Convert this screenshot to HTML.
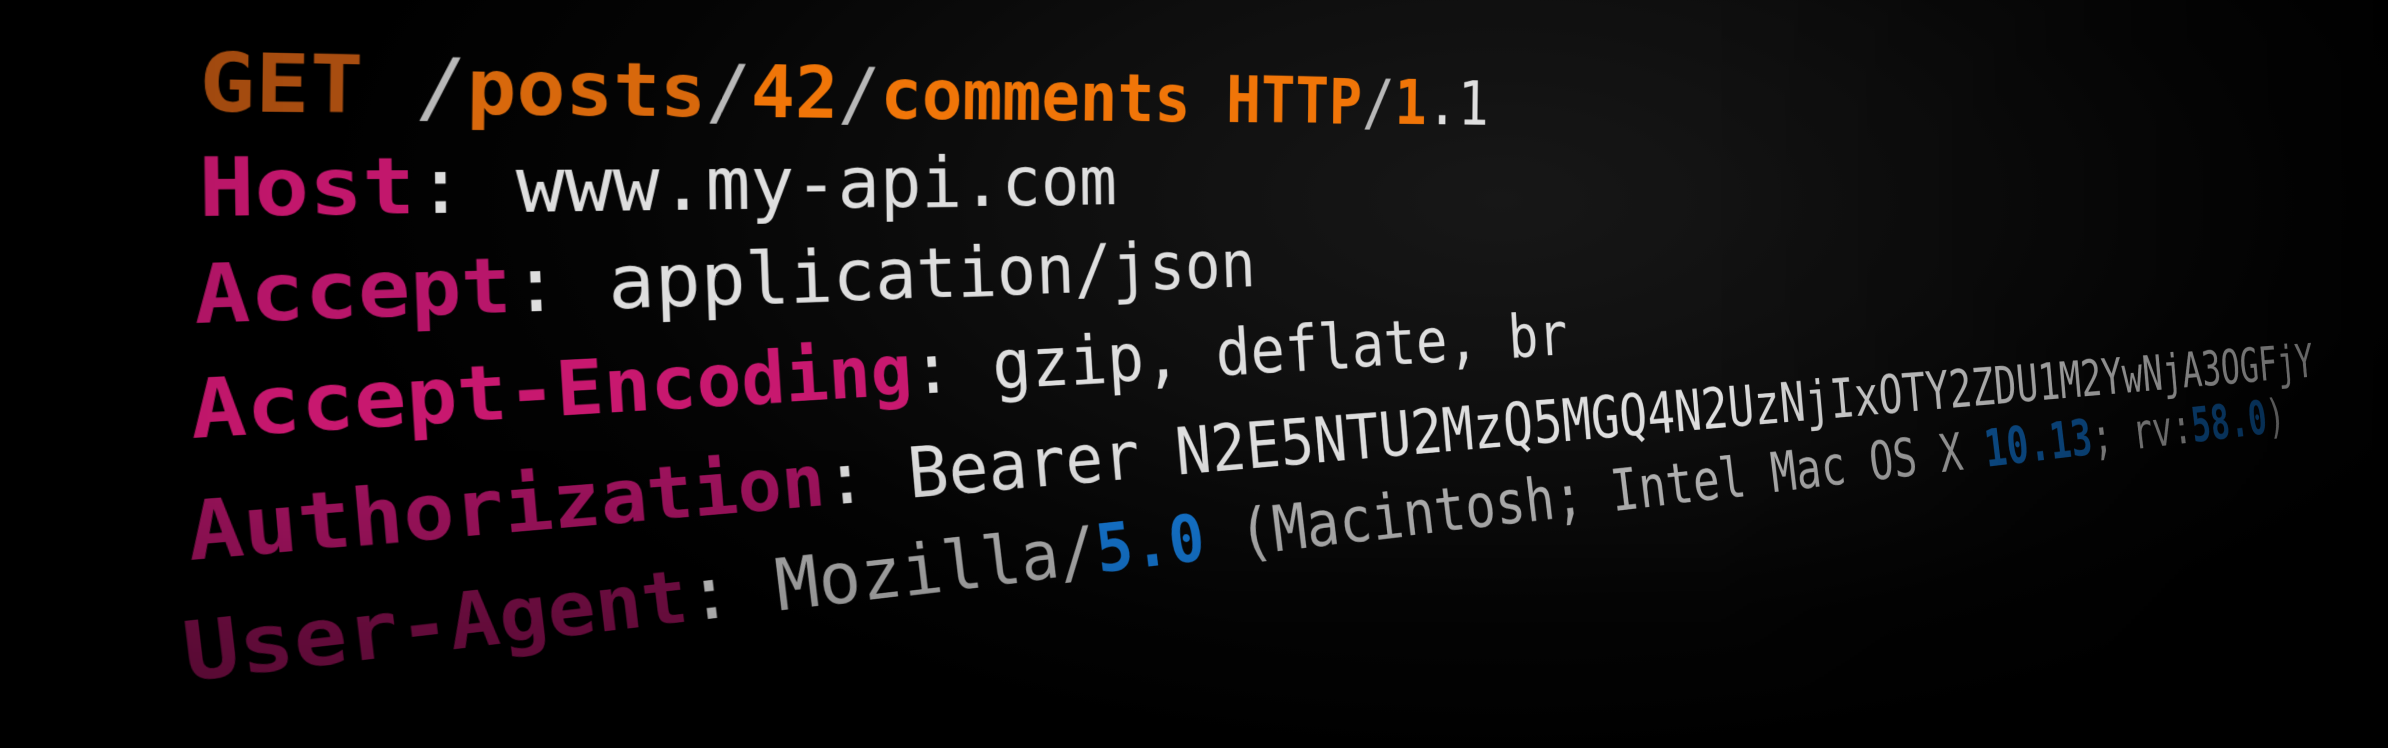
<!DOCTYPE html>
<html><head><meta charset="utf-8">
<style>
html,body{margin:0;padding:0;}
body{width:2388px;height:748px;overflow:hidden;position:relative;
background:radial-gradient(ellipse 1200px 600px at 1500px 200px,#171717 0%,#0e0e0e 40%,#040404 75%,#000 100%);}
.l{position:absolute;white-space:pre;font-family:"DejaVu Sans Mono","Liberation Mono",monospace;font-size:82px;line-height:82px;height:82px;
transform-origin:0 69px;color:#dedede;}
.k{font-weight:bold}
.o1{color:#a84d10;font-weight:bold}
.o2{color:#d8680c;font-weight:bold}
.o3{color:#f07508;font-weight:bold}
.s{color:#b8b8b8}
.b{color:#1577d2;font-weight:bold}
.fade{position:absolute;left:0;top:0;width:2388px;height:748px;
background:linear-gradient(90deg,rgba(0,0,0,.15) 0%,rgba(0,0,0,0) 12%,rgba(0,0,0,0) 72%,rgba(0,0,0,.55) 97%,rgba(0,0,0,.7) 100%);}
.fade2{position:absolute;left:0;top:0;width:2388px;height:748px;
background:linear-gradient(180deg,rgba(0,0,0,0) 0%,rgba(0,0,0,0) 60%,rgba(0,0,0,.35) 100%);}
</style></head><body>
<div class="l" style="left:199px;top:43px;transform:rotate(0.6deg) perspective(4878px) rotateY(45deg) scaleX(1.62)"><span class="o1">GET</span> <span class="s">/</span><span class="o2">posts</span><span class="s">/</span><span class="o3">42</span><span class="s">/</span><span class="o3">comments HTTP</span><span class="s">/</span><span class="o3">1</span>.1</div>
<div class="l" style="left:199px;top:148px;transform:rotate(-0.75deg) perspective(4878px) rotateY(45deg) scaleX(1.62)"><span class="k" style="color:#c2176c">Host</span>: www.my-api.com</div>
<div class="l" style="left:195px;top:255px;transform:rotate(-2deg) perspective(4878px) rotateY(45deg) scaleX(1.62)"><span class="k" style="color:#b8166a">Accept</span>: application/json</div>
<div class="l" style="left:192px;top:370px;transform:rotate(-3.5deg) perspective(4878px) rotateY(45deg) scaleX(1.62)"><span class="k" style="color:#c8186f">Accept-Encoding</span>: gzip, deflate, br</div>
<div class="l" style="left:190px;top:492px;transform:rotate(-4.95deg) perspective(4878px) rotateY(45deg) scaleX(1.62)"><span class="k" style="color:#a0135e">Authorization</span>: Bearer N2E5NTU2MzQ5MGQ4N2UzNjIxOTY2ZDU1M2YwNjA3OGFjY</div>
<div class="l" style="left:187px;top:613px;transform:rotate(-6.8deg) perspective(4878px) rotateY(45deg) scaleX(1.62);color:#b4b4b4"><span class="k" style="color:#7e0f4a">User-Agent</span><span style="color:#cfcfcf">:</span> Mozilla/<span class="b">5.0</span> (Macintosh; Intel Mac OS X <span class="b" style="color:#0f5ea8">10.13</span>; rv:<span class="b" style="color:#0f5ea8">58.0</span>)</div>
<div class="fade"></div>
<div class="fade2"></div>
</body></html>
